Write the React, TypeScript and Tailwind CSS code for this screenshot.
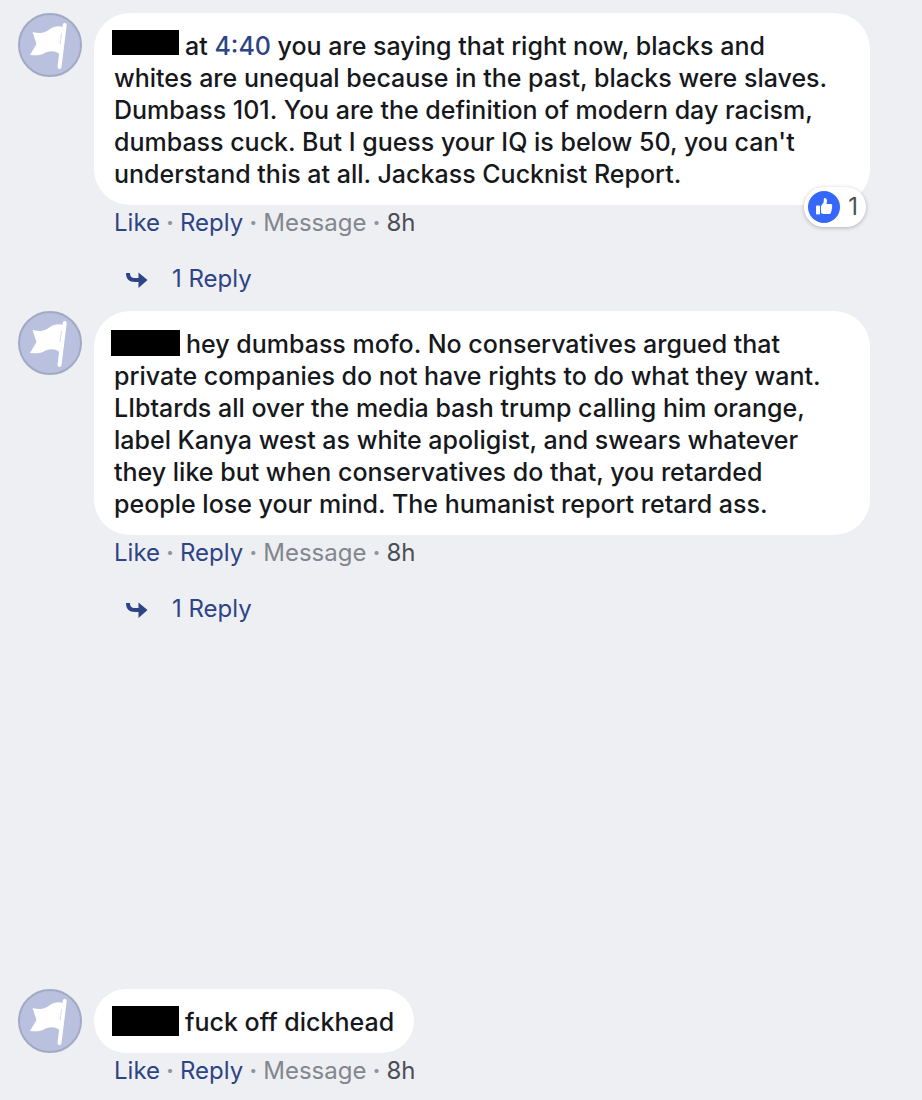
import type { ReactNode } from 'react';

type Comment = {
  id: number;
  body: ReactNode;
  nameBar: string;
  age: string;
  likes?: number;
  replies?: number;
  spacing: string;
};

const comments: Comment[] = [
  {
    id: 1,
    nameBar: '-ml-0.5 h-[25px] w-[67px]',
    body: (
      <>
        at{' '}
        <a href="#t=4:40" className="text-[#2d4486]">
          4:40
        </a>{' '}
        you are saying that right now, blacks and whites are unequal because in the past, blacks were slaves.
        Dumbass 101. You are the definition of modern day racism, dumbass cuck. But I guess your IQ is below 50,
        you can't understand this at all. Jackass Cucknist Report.
      </>
    ),
    age: '8h',
    likes: 1,
    replies: 1,
    spacing: 'mb-3.5',
  },
  {
    id: 2,
    nameBar: '-ml-[3px] mt-0.5 h-[26px] w-[69px]',
    body: 'hey dumbass mofo. No conservatives argued that private companies do not have rights to do what they want. LIbtards all over the media bash trump calling him orange, label Kanya west as white apoligist, and swears whatever they like but when conservatives do that, you retarded people lose your mind. The humanist report retard ass.',
    age: '8h',
    replies: 1,
    spacing: 'mb-[362px]',
  },
  {
    id: 3,
    nameBar: '-ml-0.5 h-[30px] w-[67px]',
    body: 'fuck off dickhead',
    age: '8h',
    spacing: 'mb-3',
  },
];

function Avatar() {
  return (
    <svg viewBox="0 0 64 64" className="h-16 w-16 shrink-0" role="img" aria-label="Page avatar">
      <circle cx="32" cy="32" r="31" fill="#b9c1df" stroke="#a2a9c3" strokeWidth="2" />
      <path
        d="M14.500 19C22 21 27 20 32 16C36 13 41 12.500 45 14L41.500 41C36 37 30 38 25 41C20 43 16 42 12 42L18.500 31Z"
        fill="#fff"
      />
      <path d="M46.700 12L41.500 54" stroke="#fff" strokeWidth="4" strokeLinecap="round" />
      <path d="M43.500 20L42 31" stroke="#ccd2e8" strokeWidth="0.800" />
    </svg>
  );
}

function ReplyArrow() {
  return (
    <svg viewBox="0 0 22 18" className="h-[18px] w-[22px]" aria-hidden>
      <path d="M0 3H4C4 7 6 8 9 8H12.500V2.500L21.500 10L12.500 18V12H9C3 12 0 9 0 3Z" fill="#2d4486" />
    </svg>
  );
}

function LikeBadge({ count }: { count: number }) {
  return (
    <button
      type="button"
      aria-label={`${count} like`}
      className="absolute right-1 -bottom-[22px] flex h-10 items-center gap-2 rounded-full bg-white pr-2 pl-1 text-2xl text-[#4b4f56] shadow-[0_1px_4px_rgba(0,0,0,0.25)]"
    >
      <svg viewBox="0 0 32 32" className="h-8 w-8" aria-hidden>
        <circle cx="16" cy="16" r="16" fill="#3567fa" />
        <rect x="8" y="14.500" width="4" height="9" rx="0.800" fill="#fff" />
        <path
          d="M13 15L15.500 11.500C16 10.500 15.500 8.500 16 7.500C16.800 6.500 18.800 7.500 19 9.500C19.100 11 18.500 12 18.500 13H22.500C24.500 13 24.600 15 23.800 15.800C24.500 16.700 24.200 17.800 23.500 18.400C24 19.400 23.500 20.400 22.900 20.800C23.200 22 22.500 23 21.200 23H16C14.700 23 14 22.500 13 22Z"
          fill="#fff"
        />
      </svg>
      <span>{count}</span>
    </button>
  );
}

function Dot() {
  return (
    <span className="w-5 text-center font-bold text-[#90949c]" aria-hidden>
      ·
    </span>
  );
}

function CommentItem({ comment }: { comment: Comment }) {
  return (
    <li className={`flex items-start gap-3 ${comment.spacing}`}>
      <Avatar />
      <div className="flex min-w-0 flex-1 flex-col items-start">
        <div className="relative rounded-[36px] bg-white px-5 pt-[17px] pb-[15px]">
          <p className="text-[25px] leading-8 font-medium text-[#16181c]">
            <span
              className={`mr-1.5 inline-block bg-black align-top ${comment.nameBar}`}
              aria-label="Name hidden"
            />
            {comment.body}
          </p>
          {comment.likes && <LikeBadge count={comment.likes} />}
        </div>

        <div className="flex h-9 items-center pl-5 text-2xl text-[#4b4f56]">
          <button type="button" className="text-[#2d4486]">
            Like
          </button>
          <Dot />
          <button type="button" className="text-[#2d4486]">
            Reply
          </button>
          <Dot />
          <button type="button" className="text-[#82868e]">
            Message
          </button>
          <Dot />
          <time>{comment.age}</time>
        </div>

        {comment.replies && (
          <button type="button" className="mt-5 flex h-9 items-center gap-6 pl-8 text-2xl text-[#2d4486]">
            <ReplyArrow />
            <span>{comment.replies} Reply</span>
          </button>
        )}
      </div>
    </li>
  );
}

export default function App() {
  return (
    <main className="min-h-screen bg-[#eeeff3] pt-[13px] pr-[52px] pl-[18px] font-['Inter',sans-serif]">
      <ul className="flex flex-col">
        {comments.map((c) => (
          <CommentItem key={c.id} comment={c} />
        ))}
      </ul>
    </main>
  );
}
